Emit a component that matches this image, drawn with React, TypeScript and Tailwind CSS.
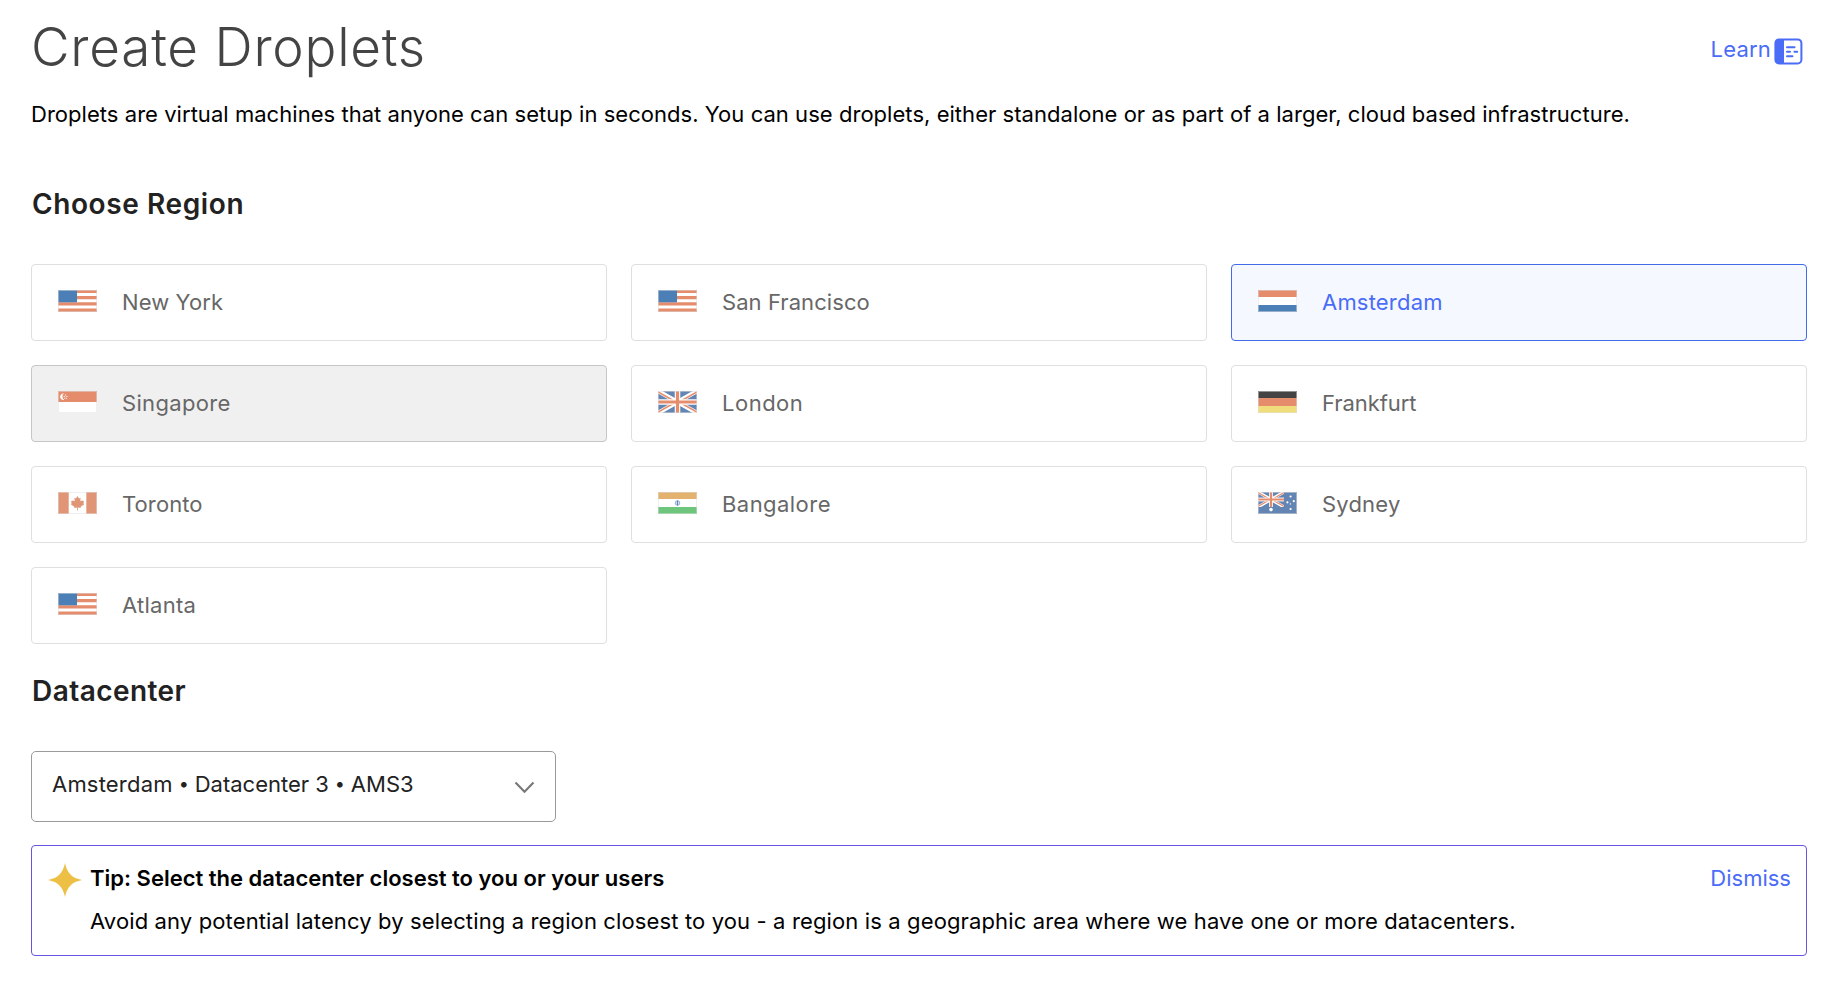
import React from "react";

const RED = "#e58c6d";
const BLUE = "#4c7fb5";
const NAVY = "#6285b3";

type Country = "us" | "nl" | "sg" | "gb" | "de" | "ca" | "in" | "au";

function UnionJack() {
  return (
    <>
      <rect width="39" height="22" fill={NAVY} />
      <path d="M0 0L39 22M39 0L0 22" stroke="#fff" strokeWidth="4.4" />
      <path d="M0 0.9L17 10.4M22 11.6L39 21.1M39 0.9L22 10.4M17 11.6L0 21.1" stroke={RED} strokeWidth="1.7" />
      <path d="M19.5 0V22" stroke="#fff" strokeWidth="5.6" />
      <path d="M0 11H39" stroke="#fff" strokeWidth="5.6" />
      <path d="M19.5 0V22M0 11H39" stroke={RED} strokeWidth="3.2" />
    </>
  );
}

function FlagArt({ country }: { country: Country }) {
  switch (country) {
    case "us":
      return (
        <>
          <path d="M0 0H39V3H0ZM0 6H39V9.3H0ZM0 12.3H39V15.5H0ZM0 18.5H39V22H0Z" fill={RED} />
          <rect width="19" height="12.3" fill={BLUE} />
        </>
      );
    case "nl":
      return (
        <>
          <rect width="39" height="7" fill={RED} />
          <rect y="15" width="39" height="7" fill={BLUE} />
        </>
      );
    case "sg":
      return (
        <>
          <rect width="39" height="11" fill={RED} />
          <path d="M6 2.6A3.2 3.2 0 1 0 6.2 8.8A3.7 3.7 0 0 1 6 2.6Z" fill="#fff" />
          <path d="M7 3.6h1.1v1H7zM5.7 5h1.1v1H5.7zM8.4 5h1.1v1H8.4zM6.3 6.8h1v1h-1zM7.9 6.8h1v1h-1z" fill="#fff" />
        </>
      );
    case "gb":
      return <UnionJack />;
    case "de":
      return (
        <>
          <rect width="39" height="7" fill="#434343" />
          <rect y="7" width="39" height="8" fill={RED} />
          <rect y="15" width="39" height="7" fill="#f0dd7c" />
        </>
      );
    case "ca":
      return (
        <>
          <rect width="10.7" height="22" fill="#e09676" />
          <rect x="28.3" width="10.7" height="22" fill="#e09676" />
          <path
            d="M19.5 4L21 6.4L22.6 5.8L22.3 9.2L24 8.6L26 9.2L25.4 11L26 12.4L22.6 14.8L22.8 16L19.9 15.6V18.4H19.1V15.6L16.2 16L16.4 14.8L13 12.4L13.6 11L13 9.2L15 8.6L16.7 9.2L16.4 5.8L18 6.4Z"
            fill="#e09676"
          />
        </>
      );
    case "in":
      return (
        <>
          <rect width="39" height="7" fill="#e2b26e" />
          <rect y="15" width="39" height="7" fill="#6dc67b" />
          <circle cx="19.5" cy="11" r="2.3" fill="#d5e0f0" stroke="#8ea9d3" strokeWidth="0.9" />
          <path d="M19.5 8.5V13.5" stroke="#5f83bd" strokeWidth="1" />
        </>
      );
    case "au":
      return (
        <>
          <rect width="39" height="22" fill={NAVY} />
          <svg width="26" height="15" viewBox="0 0 39 22" preserveAspectRatio="none">
            <UnionJack />
          </svg>
          <g fill="#fff">
            <circle cx="13" cy="17.6" r="1.8" />
            <circle cx="32.6" cy="4.5" r="1.1" />
            <circle cx="29.4" cy="10.3" r="1.1" />
            <circle cx="35.8" cy="9.2" r="1.1" />
            <circle cx="32.4" cy="11.9" r="0.7" />
            <circle cx="32.6" cy="17" r="1.1" />
          </g>
        </>
      );
  }
}

function Flag({ country }: { country: Country }) {
  return (
    <svg className="mt-1 h-[22px] w-[39px] shrink-0" viewBox="0 0 39 22">
      <rect width="39" height="22" fill="#fff" />
      <FlagArt country={country} />
      <rect x="0.5" y="0.5" width="38" height="21" fill="none" stroke="#e0e0e0" strokeOpacity="0.5" />
    </svg>
  );
}

const REGIONS: { name: string; country: Country; tracking: string }[] = [
  { name: "New York", country: "us", tracking: "tracking-[0.1px]" },
  { name: "San Francisco", country: "us", tracking: "tracking-[0.07px]" },
  { name: "Amsterdam", country: "nl", tracking: "tracking-[0.2px]" },
  { name: "Singapore", country: "sg", tracking: "tracking-[0.33px]" },
  { name: "London", country: "gb", tracking: "tracking-[0.5px]" },
  { name: "Frankfurt", country: "de", tracking: "tracking-[-0.07px]" },
  { name: "Toronto", country: "ca", tracking: "tracking-[0.1px]" },
  { name: "Bangalore", country: "in", tracking: "tracking-[0.45px]" },
  { name: "Sydney", country: "au", tracking: "tracking-[0.2px]" },
  { name: "Atlanta", country: "us", tracking: "tracking-[0.25px]" },
];

function cardStyle(name: string) {
  if (name === "Amsterdam") return "border-[#426be8] bg-[#f5f9ff] text-[#4a6cf7]";
  if (name === "Singapore") return "border-[#c6c6c6] bg-[#f0f0f0] text-[#676767]";
  return "border-[#dfdfdf] bg-white text-[#676767]";
}

function LearnIcon() {
  return (
    <svg className="mt-[4.5px] h-[27px] w-[29px]" viewBox="0 0 29 27" fill="none">
      <rect x="1.4" y="1.4" width="26" height="24" rx="3.6" stroke="#4a6cf7" strokeWidth="2" />
      <path d="M1 5a4 4 0 0 1 4-4h5v25H5a4 4 0 0 1-4-4Z" fill="#4a6cf7" />
      <path d="M13 9.2H20.5M13 13.7H16M20.4 13.7H23.2M13 18.2H18.5" stroke="#4a6cf7" strokeWidth="2" strokeLinecap="round" />
    </svg>
  );
}

export default function App() {
  return (
    <main className="min-h-[997px] w-full bg-white pt-[15px] pr-9 pl-[31px] font-['Inter','Liberation_Sans',sans-serif] text-[22px] leading-8 text-black">
      <header className="flex items-start justify-between">
        <h1 className="text-[53px] leading-16 font-light tracking-[0.77px] text-[#444]">Create Droplets</h1>
        <a className="mt-[18px] mr-1 flex gap-[3px] text-[#4a6cf7]">
          <span className="tracking-[0.2px]">Learn</span>
          <LearnIcon />
        </a>
      </header>
      <p className="mt-[19px] whitespace-nowrap tracking-[0.04px]">
        Droplets are virtual machines that anyone can setup in seconds. You can use droplets, either standalone or as
        part of a larger, cloud based infrastructure.
      </p>

      <h2 className="mt-14 pl-px text-[28px] leading-9 font-semibold tracking-[0.6px] text-[#222]">Choose Region</h2>
      <section className="mt-[42px] grid grid-cols-3 gap-6">
        {REGIONS.map((r) => (
          <button
            key={r.name}
            className={`flex h-[77px] items-start gap-[25px] rounded-[4px] border pt-[21px] pl-[26px] text-left ${cardStyle(r.name)}`}
          >
            <Flag country={r.country} />
            <span className={r.tracking}>{r.name}</span>
          </button>
        ))}
      </section>

      <h2 className="mt-[29px] pl-px text-[28px] leading-9 font-semibold tracking-[0.45px] text-[#222]">Datacenter</h2>
      <button className="mt-[42px] flex h-[71px] w-[525px] items-start justify-between rounded-[5px] border border-[#999] pt-4 pr-[20px] pl-5 text-[#222]">
        <span className="flex gap-[7px]">
          <span className="tracking-[0.2px]">Amsterdam</span>
          <span className="flex w-2 justify-center text-[18px]">•</span>
          <span>Datacenter 3</span>
          <span className="flex w-2 justify-center text-[18px]">•</span>
          <span>AMS3</span>
        </span>
        <svg className="mt-[13px] h-[14px] w-[21px]" viewBox="0 0 21 14" fill="none">
          <path d="M1.5 1.5L10.5 10.7L19.5 1.5" stroke="#777" strokeWidth="2.1" />
        </svg>
      </button>

      <aside className="mt-[23px] flex h-[111px] items-start rounded-[4px] border border-[#6655e0] pt-4 pr-[15px] pl-[15.5px]">
        <svg className="mt-px h-[34px] w-[34px] shrink-0" viewBox="0 0 34 34">
          <path d="M17 0C19 10 24 15 34 17C24 19 19 24 17 34C15 24 10 19 0 17C10 15 15 10 17 0Z" fill="#edc045" />
        </svg>
        <div className="ml-[8.5px] flex flex-1 flex-col gap-[11px] whitespace-nowrap">
          <strong className="font-semibold">Tip: Select the datacenter closest to you or your users</strong>
          <p className="tracking-[0.13px]">
            Avoid any potential latency by selecting a region closest to you - a region is a geographic area where we
            have one or more datacenters.
          </p>
        </div>
        <a className="text-[#4a6cf7]">Dismiss</a>
      </aside>
    </main>
  );
}
